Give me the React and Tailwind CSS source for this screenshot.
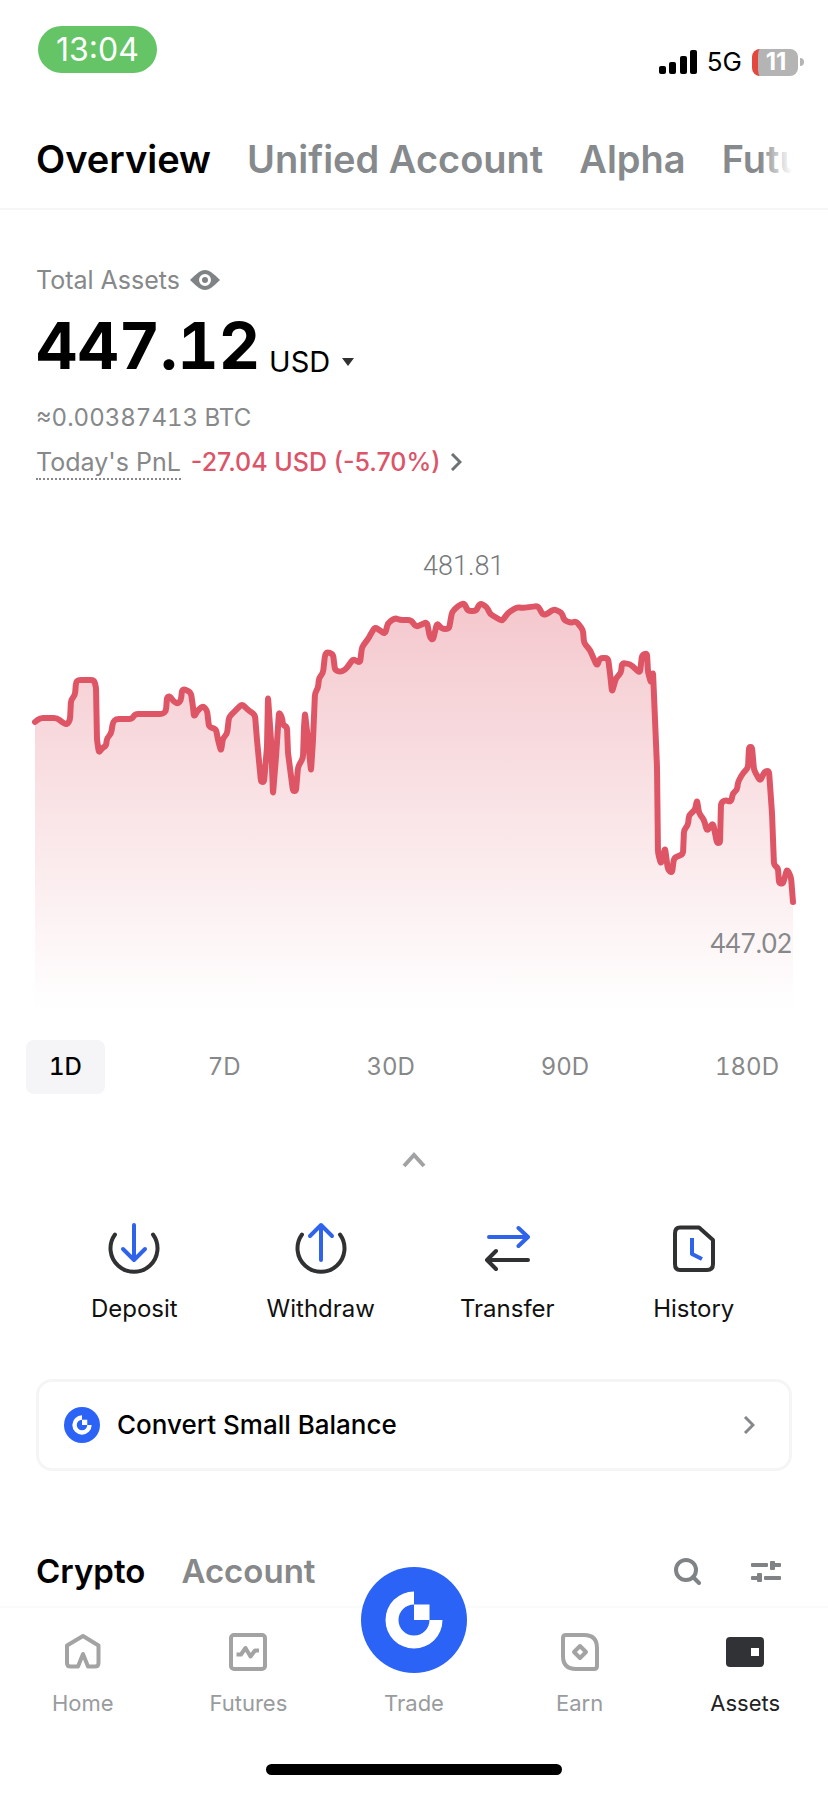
import { useState } from "react";

const tabs = ["Overview", "Unified Account", "Alpha", "Futures"];
const ranges = ["1D", "7D", "30D", "90D", "180D"];

// Balance history, as [x, y] in chart units
const points = [
  [35, 722], [40, 718], [57, 718], [62, 722], [67, 725], [70, 720], [71, 700], [75, 695], [76, 682], [78, 680],
  [94, 680], [96, 687], [97, 740], [99, 753], [102, 748], [106, 746], [107, 738], [111, 734], [113, 722], [116, 719],
  [132, 719], [135, 714], [163, 714], [166, 711], [167, 697], [170, 696], [173, 701], [178, 704], [181, 700], [182, 690],
  [185, 689], [191, 693], [193, 707], [194, 717], [198, 710], [203, 706], [207, 710], [209, 727], [216, 729], [218, 740],
  [221, 751], [223, 738], [227, 734], [229, 717], [235, 711], [242, 704], [247, 709], [255, 715], [257, 740], [261, 782],
  [264, 782], [267, 747], [268, 697], [271, 740], [273, 794], [276, 757], [279, 712], [282, 717], [283, 725], [287, 727],
  [288, 753], [293, 791], [296, 791], [298, 767], [303, 758], [304, 727], [305, 713], [308, 740], [311, 771], [313, 740],
  [315, 693], [318, 688], [319, 678], [323, 673], [325, 655], [327, 652], [333, 654], [335, 670], [340, 672], [345, 670],
  [349, 665], [353, 659], [360, 663], [362, 647], [368, 639], [372, 632], [375, 627], [385, 634], [388, 623], [395, 618],
  [400, 620], [411, 620], [416, 627], [427, 622], [430, 638], [433, 640], [437, 623], [442, 629], [449, 629], [452, 612],
  [458, 606], [464, 603], [468, 611], [476, 611], [480, 603], [487, 607], [490, 614], [502, 621], [508, 613], [517, 607],
  [522, 608], [538, 606], [543, 615], [547, 614], [554, 609], [562, 613], [564, 620], [571, 623], [576, 621], [583, 630],
  [584, 643], [590, 650], [593, 657], [597, 666], [600, 658], [608, 658], [610, 673], [612, 692], [616, 678], [621, 673],
  [622, 663], [630, 664], [640, 673], [642, 655], [647, 653], [648, 672], [651, 683], [653, 672], [657, 767], [658, 853],
  [661, 864], [665, 848], [668, 870], [672, 873], [674, 858], [683, 854], [684, 830], [688, 825], [689, 815], [695, 810],
  [697, 800], [699, 813], [704, 820], [707, 831], [713, 823], [717, 843], [720, 843], [721, 803], [725, 800], [731, 802],
  [733, 793], [737, 790], [738, 782], [743, 773], [748, 768], [749, 747], [752, 747], [754, 770], [760, 781], [765, 771],
  [769, 771], [772, 813], [774, 865], [778, 868], [779, 883], [783, 884], [787, 869], [791, 877], [793, 902],
];

// Round every corner: run through the middle of each segment, bending at the points
const linePath = points
  .map(([x, y], i) => {
    if (i === 0) return `M${x} ${y}`;
    const next = points[i + 1];
    if (!next) return `L${x} ${y}`;
    const [px, py] = points[i - 1];
    const inLen = Math.hypot(x - px, y - py);
    const outLen = Math.hypot(next[0] - x, next[1] - y);
    const a = Math.min(0.5, 3 / inLen);
    const b = Math.min(0.5, 3 / outLen);
    return `L${x + (px - x) * a} ${y + (py - y) * a} Q${x} ${y} ${x + (next[0] - x) * b} ${y + (next[1] - y) * b}`;
  })
  .join(" ");
const areaPath = `${linePath} V1010 H35 Z`;

function Logo({ className }) {
  return (
    <svg viewBox="0 0 106 106" className={className} aria-hidden="true">
      <circle cx="53" cy="53" r="53" fill="#2a63f5" />
      <path d="M53 24.5 A28.5 28.5 0 1 0 81.5 53 H68.500 A15.500 15.500 0 1 1 53 37.500 Z" fill="#fff" />
      <rect x="53" y="37.500" width="15.500" height="15.500" fill="#fff" />
    </svg>
  );
}

function Chevron({ className }) {
  return (
    <svg viewBox="0 0 12 18" className={className} fill="none" stroke="currentColor" strokeWidth="3" aria-hidden="true">
      <path d="M2 1 L10 9 L2 17" />
    </svg>
  );
}

function BalanceChart() {
  return (
    <div className="relative mt-2 h-[420px]">
      <svg viewBox="36 590 756 420" preserveAspectRatio="none" className="block h-full w-full overflow-visible" role="img" aria-label="Balance over one day">
        <defs>
          <linearGradient id="area" gradientUnits="userSpaceOnUse" x1="0" y1="603" x2="0" y2="1010">
            <stop offset="0" stopColor="#dc5263" stopOpacity="0.32" />
            <stop offset="1" stopColor="#dc5263" stopOpacity="0" />
          </linearGradient>
        </defs>
        <path d={areaPath} fill="url(#area)" />
        <path d={linePath} fill="none" stroke="#de5665" strokeWidth="6" strokeLinecap="round" strokeLinejoin="round" />
      </svg>
      <span className="absolute right-0 bottom-[51px] font-['Lato',sans-serif] text-[26px] leading-8 text-[#868889]">447.02</span>
    </div>
  );
}

const actions = [
  {
    label: "Deposit",
    icon: (
      <>
        <path d="M9 14.500 A23.500 23.500 0 1 0 47 14.500" stroke="#303133" />
        <path d="M28 5 V40 M17 29 L28 40 L39 29" stroke="#2f64ea" />
      </>
    ),
  },
  {
    label: "Withdraw",
    icon: (
      <>
        <path d="M9 14.500 A23.500 23.500 0 1 0 47 14.500" stroke="#303133" />
        <path d="M28 40 V5 M17 16 L28 5 L39 16" stroke="#2f64ea" />
      </>
    ),
  },
  {
    label: "Transfer",
    icon: (
      <>
        <path d="M10 17 H49 M39.500 8 L49 17 L39.500 26" stroke="#2f64ea" />
        <path d="M49 40 H8 M17 31 L8 40 L17 49" stroke="#303133" />
      </>
    ),
  },
  {
    label: "History",
    icon: (
      <>
        <path d="M14 7.500 H33 L47 20 V44 Q47 50 41 50 H14 Q9 50 9 44 V13.500 Q9 7.500 14 7.500 Z" stroke="#303133" />
        <path d="M26 18 V34 L36 39" stroke="#2f64ea" strokeLinecap="butt" />
      </>
    ),
  },
];

const navItems = [
  {
    label: "Home",
    icon: <path d="M20 4 L35.500 13.500 V31 Q35.500 34.500 32 34.500 H25 L20 22 L15 34.500 H7.500 Q4 34.500 4 31 V13.500 Z" />,
  },
  {
    label: "Futures",
    icon: (
      <>
        <rect x="3" y="3" width="34" height="34" rx="3" />
        <path d="M8.500 22.500 H13 L17.500 16 L22.500 24.500 L27 18.500 H31" />
      </>
    ),
  },
  { label: "Trade" },
  {
    label: "Earn",
    icon: (
      <>
        <path d="M6 3 H24 Q37 3 37 16 V34 Q37 37 34 37 H16 Q3 37 3 24 V6 Q3 3 6 3 Z" />
        <path d="M20 14 L26 20 L20 26 L14 20 Z" />
      </>
    ),
  },
  {
    label: "Assets",
    active: true,
    icon: (
      <>
        <rect x="1" y="5" width="38" height="30" rx="4" fill="#303236" stroke="none" />
        <rect x="26" y="16" width="8" height="8" fill="#fff" stroke="none" />
      </>
    ),
  },
];

export default function App() {
  const [tab, setTab] = useState("Overview");
  const [range, setRange] = useState("1D");
  const [list, setList] = useState("Crypto");

  return (
    <div className="flex min-h-screen flex-col bg-white font-['Inter','Liberation_Sans',sans-serif] text-black">
      {/* Status bar */}
      <div className="flex h-[110px] items-start justify-between pt-[26px] pr-6 pl-[38px]">
        <div className="flex h-[47px] items-center rounded-full bg-[#65c466] px-[18px] text-[32px] leading-none text-white">13:04</div>
        <div className="flex items-center gap-[10px] pt-[22px]">
          <svg viewBox="0 0 38 24" className="h-6 w-[38px]" aria-hidden="true">
            <rect x="0" y="16" width="7" height="8" rx="2" />
            <rect x="10" y="12" width="7" height="12" rx="2" />
            <rect x="21" y="6" width="7" height="18" rx="2" />
            <rect x="31" y="0" width="7" height="24" rx="2" />
          </svg>
          <span className="text-[26px] leading-7">5G</span>
          <div className="flex items-center gap-[2px]">
            <div className="flex h-[27px] w-[46px] items-center justify-center rounded-lg border-l-[6px] border-[#e2483d] bg-[#b4b4b4] pr-1 text-[24px] leading-none font-bold text-white">
              11
            </div>
            <div className="h-2 w-1 rounded-r-full bg-[#b4b4b4]" />
          </div>
        </div>
      </div>

      {/* Account tabs */}
      <header className="border-b-2 border-[#f6f6f7] px-9 py-6">
        <div className="relative overflow-hidden">
          <div className="flex gap-9">
            {tabs.map((name) => (
              <button
                key={name}
                onClick={() => setTab(name)}
                className={`shrink-0 text-[38px] leading-[50px] font-semibold whitespace-nowrap ${tab === name ? "text-black" : "text-[#868a8d]"}`}
              >
                {name}
              </button>
            ))}
          </div>
          <div className="pointer-events-none absolute inset-y-0 right-0 w-8 bg-linear-to-r from-white/0 to-white" />
        </div>
      </header>

      <main className="px-9 pt-[54px]">
        {/* Balance summary */}
        <div className="flex items-center gap-[10px] text-[25px] leading-8 text-[#868889]">
          Total Assets
          <button aria-label="Hide balance">
            <svg viewBox="0 0 30 20" className="block h-5 w-[30px]" aria-hidden="true">
              <path d="M0 10 Q5 5 9 2 Q15 -2 21 2 Q25 5 30 10 Q25 15 21 18 Q15 22 9 18 Q5 15 0 10 Z" fill="#7f8385" />
              <circle cx="15" cy="10" r="4.500" fill="#7f8385" stroke="#fff" strokeWidth="3" />
            </svg>
          </button>
        </div>
        <div className="mt-[18px] flex items-end gap-[9px]">
          <span className="text-[64px] leading-[64px] font-bold tabular-nums">447.12</span>
          <button className="flex items-center gap-3 text-[29px] leading-8">
            USD
            <svg viewBox="0 0 12 8" className="h-2 w-3" aria-hidden="true">
              <path d="M0 0 H12 L6 8 Z" fill="#303133" />
            </svg>
          </button>
        </div>
        <p className="mt-6 text-[24px] leading-8 text-[#868889] tabular-nums">≈0.00387413 BTC</p>
        <div className="mt-3 flex items-start gap-[10px] text-[25px] leading-8">
          <span className="border-b-2 border-dotted border-[#868889] text-[#868889]">Today's PnL</span>
          <a href="#pnl" className="flex items-center gap-[10px] font-medium text-[#dc5468]">
            -27.04 USD (-5.70%)
            <Chevron className="h-[18px] w-3 text-[#6f7274]" />
          </a>
        </div>

        <p className="mt-[70px] pl-[387px] font-['Roboto',sans-serif] text-[27px] leading-8 font-light text-[#75787a]">481.81</p>
        <BalanceChart />

        {/* Range picker */}
        <div className="-mx-[10px] mt-[30px] flex justify-between">
          {ranges.map((name) => (
            <button
              key={name}
              onClick={() => setRange(name)}
              className={`h-[54px] rounded-lg px-[23px] text-[24px] leading-8 tabular-nums ${range === name ? "bg-[#f5f5f7] font-medium text-black" : "text-[#868889]"}`}
            >
              {name}
            </button>
          ))}
        </div>

        <button aria-label="Collapse chart" className="mx-auto mt-[54px] block">
          <svg viewBox="0 0 24 24" className="h-6 w-6" fill="none" stroke="#a0a2a3" strokeWidth="4" aria-hidden="true">
            <path d="M2 18 L12 7 L22 18" />
          </svg>
        </button>

        {/* Quick actions */}
        <div className="mx-[5px] mt-12 grid grid-cols-4">
          {actions.map(({ label, icon }) => (
            <button key={label} className="flex flex-col items-center gap-[17px] text-[24px] leading-8 text-[#111]">
              <svg viewBox="0 0 56 56" className="h-14 w-14" fill="none" strokeWidth="4" strokeLinecap="round" strokeLinejoin="round" aria-hidden="true">
                {icon}
              </svg>
              {label}
            </button>
          ))}
        </div>

        <a href="#convert" className="mt-[54px] flex h-[92px] items-center rounded-2xl border-3 border-[#f5f5f6] pr-[34px] pl-[25px]">
          <Logo className="h-9 w-9" />
          <span className="ml-[17px] flex-1 text-[26px] leading-8 font-medium">Convert Small Balance</span>
          <Chevron className="h-[18px] w-3 text-[#85888a]" />
        </a>

        {/* Asset list header */}
        <div className="mt-20 flex items-center justify-between pr-[11px]">
          <div className="flex gap-9">
            {["Crypto", "Account"].map((name) => (
              <button
                key={name}
                onClick={() => setList(name)}
                className={`text-[33px] leading-10 font-semibold ${list === name ? "text-black" : "text-[#868889]"}`}
              >
                {name}
              </button>
            ))}
          </div>
          <div className="flex items-center gap-[50px]">
            <button aria-label="Search">
              <svg viewBox="0 0 28 28" className="block h-7 w-7" fill="none" stroke="#7f8385" strokeWidth="4" strokeLinecap="round" aria-hidden="true">
                <circle cx="13" cy="13" r="10" />
                <path d="M20 20 L26 26" />
              </svg>
            </button>
            <button aria-label="Filter">
              <svg viewBox="0 0 30 22" className="block h-[22px] w-[30px]" fill="#7f8385" aria-hidden="true">
                <rect x="0" y="3" width="17" height="4" rx="1" />
                <rect x="19" y="1" width="5" height="9" rx="1" />
                <rect x="23" y="3" width="7" height="4" rx="1" />
                <rect x="0" y="16" width="7" height="4" rx="1" />
                <rect x="6" y="13" width="5" height="9" rx="1" />
                <rect x="13" y="16" width="17" height="4" rx="1" />
              </svg>
            </button>
          </div>
        </div>
      </main>

      {/* Bottom navigation */}
      <nav className="mt-[15px] border-t-2 border-[#fafafa] bg-white">
        <div className="grid grid-cols-5">
          {navItems.map(({ label, icon, active }) => (
            <a
              key={label}
              href={`#${label.toLowerCase()}`}
              className={`flex flex-col items-center justify-end text-[22px] leading-[30px] ${active ? "text-[#222]" : "text-[#999c9e]"}`}
            >
              {icon ? (
                <svg viewBox="0 0 40 40" className="mt-6 mb-4 h-10 w-10" fill="none" stroke="#a3a3a4" strokeWidth="4" strokeLinejoin="round" aria-hidden="true">
                  {icon}
                </svg>
              ) : (
                <Logo className="-mt-[41px] mb-[15px] h-[106px] w-[106px]" />
              )}
              {label}
            </a>
          ))}
        </div>
        <div className="mx-auto mt-[46px] mb-4 h-[11px] w-[296px] rounded-full bg-black" />
      </nav>
    </div>
  );
}
